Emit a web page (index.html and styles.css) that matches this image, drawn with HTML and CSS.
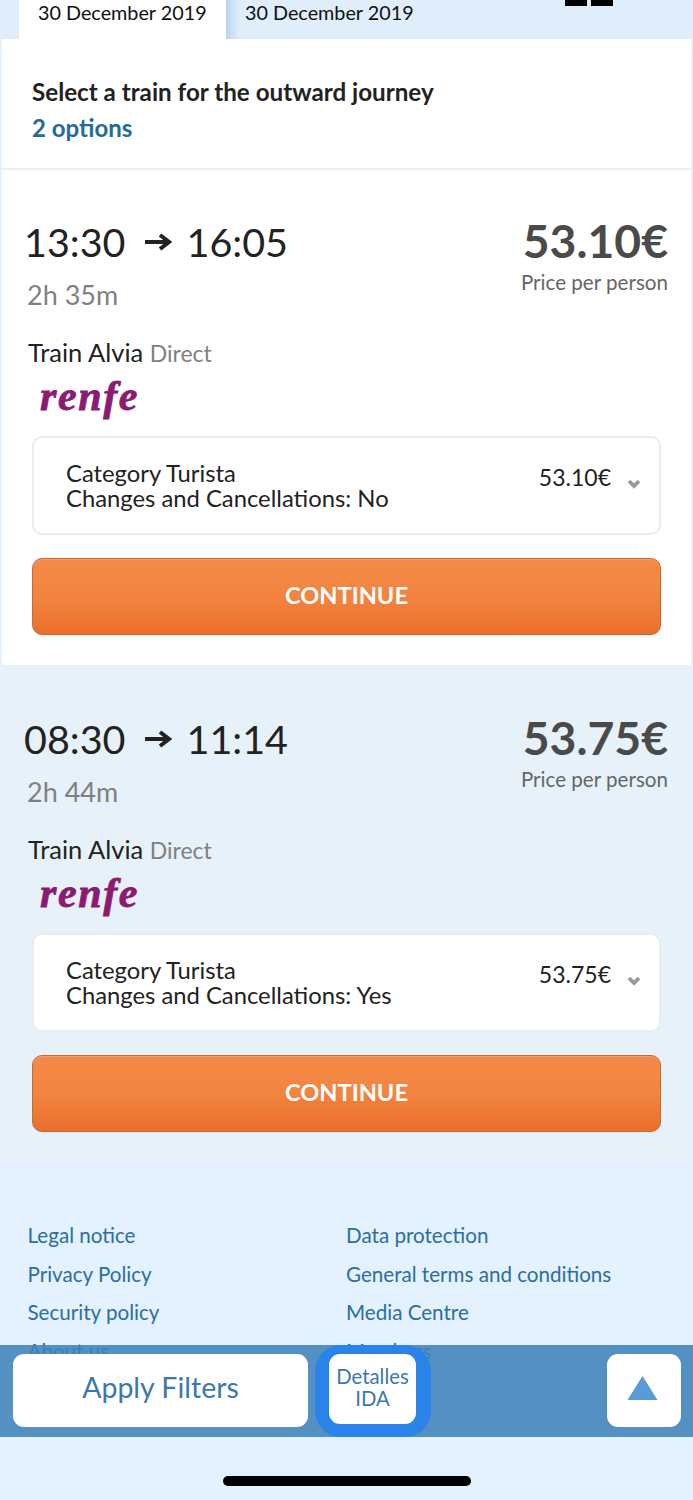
FILE: index.html
```html
<!DOCTYPE html>
<html lang="en">
<head>
<meta charset="utf-8">
<title>Select a train</title>
<link rel="stylesheet" href="styles.css">
</head>
<body>
<div class="page">
  <div class="tabs">
    <div class="tab tab-active">30 December 2019</div>
    <div class="tab tab-next">30 December 2019</div>
    <div class="tab-icon"><span></span><span></span></div>
  </div>
  <main class="panel">
    <header class="heading">
      <h1>Select a train for the outward journey</h1>
      <p>2 options</p>
    </header>
    <section class="card">
      <div class="top">
        <div>
          <div class="times"><span>13:30</span><svg class="arrow" viewBox="0 0 28 20"><path d="M1 10H25M16 3L25 10L16 17" /></svg><span>16:05</span></div>
          <div class="duration">2h 35m</div>
        </div>
        <div class="price"><strong>53.10€</strong><span>Price per person</span></div>
      </div>
      <div class="train">Train Alvia <span>Direct</span></div>
      <div class="renfe">renfe</div>
      <div class="fare">
        <div>Category Turista<br>Changes and Cancellations: No</div>
        <div class="fare-price">53.10€<svg class="chev" viewBox="0 0 14 10"><path d="M2 2L7 7L12 2" /></svg></div>
      </div>
      <button class="cta">CONTINUE</button>
    </section>
    <section class="card card-alt">
      <div class="top">
        <div>
          <div class="times"><span>08:30</span><svg class="arrow" viewBox="0 0 28 20"><path d="M1 10H25M16 3L25 10L16 17" /></svg><span>11:14</span></div>
          <div class="duration">2h 44m</div>
        </div>
        <div class="price"><strong>53.75€</strong><span>Price per person</span></div>
      </div>
      <div class="train">Train Alvia <span>Direct</span></div>
      <div class="renfe">renfe</div>
      <div class="fare">
        <div>Category Turista<br>Changes and Cancellations: Yes</div>
        <div class="fare-price">53.75€<svg class="chev" viewBox="0 0 14 10"><path d="M2 2L7 7L12 2" /></svg></div>
      </div>
      <button class="cta">CONTINUE</button>
    </section>
  </main>
  <footer class="links">
    <a>Legal notice</a><a>Data protection</a>
    <a>Privacy Policy</a><a>General terms and conditions</a>
    <a>Security policy</a><a>Media Centre</a>
    <a>About us</a><a>Members</a>
  </footer>
  <nav class="bar">
    <button class="filters">Apply Filters</button>
    <div class="ring"><button class="details">Detalles<br>IDA</button></div>
    <button class="up"><svg viewBox="0 0 30 24"><path d="M15 0L30 24H0Z" /></svg></button>
  </nav>
  <div class="home"></div>
</div>
</body>
</html>
```
FILE: styles.css
```css
* { box-sizing: border-box; }
html, body { margin: 0; padding: 0; }
body { font-family: Lato, "Liberation Sans", sans-serif; color: #222; background: #e4f1fe; }
.page { position: relative; width: 693px; height: 1500px; overflow: hidden; }

.tabs { display: flex; height: 39px; padding-left: 19px; background: #e0eefb; position: relative; }
.tab { font-size: 19.800px; line-height: 25px; color: #111; }
.tab-active { width: 207px; background: #fff; padding-left: 19px; }
.tab-next { width: 250px; padding-left: 19px; background: linear-gradient(90deg, #b7d4ee 0, #e0eefb 14px); }
.tab-icon { position: absolute; left: 565px; top: 0; display: flex; gap: 4px; }
.tab-icon span { width: 22px; height: 6px; background: #000; }

.panel { margin: 0 2px; background: #fff; }
.heading { height: 131px; padding: 37px 30px 0; border-bottom: 2px solid #e6f0f8; }
.heading h1 { margin: 0; font-size: 24.200px; line-height: 32px; font-weight: 700; color: #222; }
.heading p { margin: 4px 0 0; font-size: 24px; line-height: 32px; font-weight: 700; color: #26699b; }

.card { height: 495px; padding: 47px 30px 0; }
.card-alt { height: 497px; padding-top: 49px; background: #e6f1f9; }
.top { display: flex; justify-content: space-between; margin-left: -8px; margin-right: -7px; }
.times { display: flex; align-items: center; font-size: 39.500px; line-height: 50px; color: #222; }
.arrow { width: 28px; height: 20px; margin: 0 15px 0 18px; fill: none; stroke: #222; stroke-width: 4; }
.duration { margin-top: 10px; margin-left: 3px; font-size: 27px; line-height: 36px; color: #808080; }
.price { display: flex; flex-direction: column; align-items: flex-end; }
.price strong { margin-top: -2px; font-size: 46.300px; line-height: 50px; font-weight: 700; color: #4a4a4a; }
.price span { margin-top: 4px; font-size: 20.600px; line-height: 26px; color: #666; }
.train { margin-top: 22px; margin-left: -4px; font-size: 25.500px; line-height: 34px; color: #222; }
.train span { font-size: 23px; color: #808080; }
.renfe { height: 50px; margin-top: 4px; margin-left: 8px; font-family: "Liberation Serif", serif; font-style: italic; font-weight: 700; font-size: 42px; line-height: 44px; letter-spacing: 1.6px; color: #8c1a72; -webkit-text-stroke: 0.8px #8c1a72; }
.fare { display: flex; justify-content: space-between; height: 99px; margin-top: 12px; padding: 23px 18px 0 32px; background: #fff; border: 2px solid #eaecee; border-radius: 10px; font-size: 23.800px; line-height: 25px; color: #222; }
.fare-price { display: flex; align-items: flex-start; padding-top: 4px; font-size: 23px; }
.chev { width: 14px; height: 10px; margin: 14px 0 0 16px; fill: none; stroke: #999; stroke-width: 3.8; }
.cta { display: block; width: 100%; height: 77px; margin-top: 23px; padding: 0 0 4px; border: 1px solid #c96a32; border-radius: 10px; background: linear-gradient(180deg, #f48a47 0, #f28441 50%, #ec6e2a 100%); box-shadow: inset 0 1px 0 #f7a06a; color: #fff; font-family: Lato, sans-serif; font-size: 23.600px; font-weight: 700; }

.links { display: grid; grid-template-columns: 318.5px 1fr; grid-auto-rows: 38.5px; padding: 54px 27.5px 0; }
.links a { font-size: 20.600px; line-height: 38.5px; color: #2a6ea3; }

.bar { position: absolute; left: 0; top: 1345px; width: 693px; height: 92px; display: flex; align-items: flex-start; padding: 9px 12px 0 13px; background: rgba(65, 130, 185, .88); }
.bar button { border: 0; background: #fff; font-family: Lato, sans-serif; color: #3a78b0; }
.filters { width: 295px; height: 73px; padding: 0 0 8px; border-radius: 11px; font-size: 28.500px; }
.ring { width: 116px; height: 92px; margin: -9px 0 0 7px; padding: 9px 14px 0; background: rgba(38, 130, 236, .9); border-radius: 26px; }
.details { display: block; width: 87px; height: 70px; padding: 0 0 5px; border-radius: 11px; font-size: 20.300px; line-height: 22px; }
.up { width: 74px; height: 73px; margin-left: auto; padding: 0 3px 6px 0; border-radius: 11px; display: flex; align-items: center; justify-content: center; }
.up svg { width: 31px; height: 24px; fill: #5b9bd5; }
.home { position: absolute; left: 223px; top: 1476px; width: 248px; height: 10px; border-radius: 5px; background: #000; }
```
